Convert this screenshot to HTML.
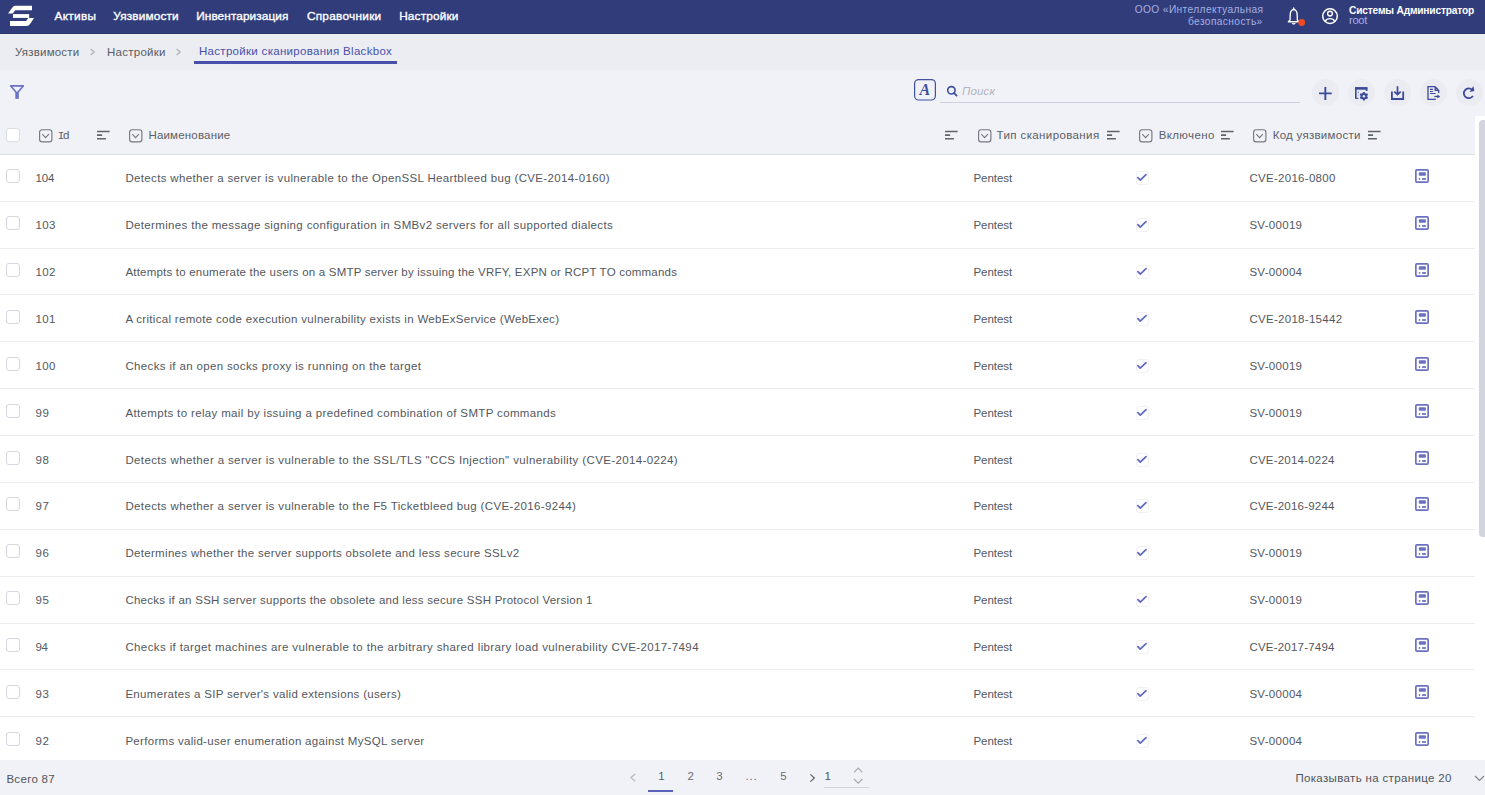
<!DOCTYPE html>
<html><head><meta charset="utf-8"><style>
html,body{margin:0;padding:0;width:1485px;height:795px;overflow:hidden;background:#f1f2f7;}
body{position:relative;font-family:"Liberation Sans",sans-serif;}
.r{position:absolute;box-sizing:content-box;}
.t{position:absolute;white-space:pre;line-height:20px;font-family:"Liberation Sans",sans-serif;}
svg.r{overflow:visible}
</style></head><body>
<div class="r" style="left:0px;top:0px;width:1485px;height:33px;background:#313d7b;"></div>
<div class="r" style="left:0px;top:33px;width:1485px;height:1px;background:#2a356e;"></div>
<div class="r" style="left:0px;top:34px;width:1485px;height:36px;background:#ecedf2;"></div>
<div class="r" style="left:0px;top:70px;width:1485px;height:690px;background:#f1f2f7;"></div>
<div class="r" style="left:194px;top:61px;width:203px;height:3px;background:#4650ab;"></div>
<div class="r" style="left:940px;top:102px;width:360px;height:1px;background:#cfd0dc;"></div>
<div class="r" style="left:0px;top:155px;width:1475px;height:605px;background:#ffffff;"></div>
<div class="r" style="left:0px;top:154px;width:1475px;height:1px;background:#dddde7;"></div>
<div class="r" style="left:1475px;top:116px;width:10px;height:644px;background:#ffffff;"></div>
<div class="r" style="left:1479px;top:120px;width:8px;height:417px;background:#d4d4e0;border-radius:4px;"></div>
<div class="r" style="left:0px;top:201px;width:1475px;height:1px;background:#ececf3;"></div>
<div class="r" style="left:0px;top:248px;width:1475px;height:1px;background:#ececf3;"></div>
<div class="r" style="left:0px;top:294px;width:1475px;height:1px;background:#ececf3;"></div>
<div class="r" style="left:0px;top:341px;width:1475px;height:1px;background:#ececf3;"></div>
<div class="r" style="left:0px;top:388px;width:1475px;height:1px;background:#ececf3;"></div>
<div class="r" style="left:0px;top:435px;width:1475px;height:1px;background:#ececf3;"></div>
<div class="r" style="left:0px;top:482px;width:1475px;height:1px;background:#ececf3;"></div>
<div class="r" style="left:0px;top:529px;width:1475px;height:1px;background:#ececf3;"></div>
<div class="r" style="left:0px;top:576px;width:1475px;height:1px;background:#ececf3;"></div>
<div class="r" style="left:0px;top:623px;width:1475px;height:1px;background:#ececf3;"></div>
<div class="r" style="left:0px;top:669px;width:1475px;height:1px;background:#ececf3;"></div>
<div class="r" style="left:0px;top:716px;width:1475px;height:1px;background:#ececf3;"></div>
<div class="r" style="left:0px;top:760px;width:1485px;height:35px;background:#f1f2f7;"></div>
<div class="r" style="left:648px;top:790px;width:25px;height:2px;background:#5a62ba;"></div>
<div class="r" style="left:824px;top:787px;width:45px;height:1px;background:#d2d3dd;"></div>
<div class="r" style="left:1312.1999999999998px;top:79px;width:26.8px;height:26.8px;border-radius:50%;background:#ebebf2"></div>
<div class="r" style="left:1348.1999999999998px;top:79px;width:26.8px;height:26.8px;border-radius:50%;background:#ebebf2"></div>
<div class="r" style="left:1384.1999999999998px;top:79px;width:26.8px;height:26.8px;border-radius:50%;background:#ebebf2"></div>
<div class="r" style="left:1420.1999999999998px;top:79px;width:26.8px;height:26.8px;border-radius:50%;background:#ebebf2"></div>
<div class="r" style="left:1456.1999999999998px;top:79px;width:26.8px;height:26.8px;border-radius:50%;background:#ebebf2"></div>
<div class="r" style="left:5.5px;top:128px;width:12px;height:12px;border:1px solid #dcdce4;border-radius:3px;background:#fff"></div>
<div class="r" style="left:5.5px;top:169px;width:12px;height:12px;border:1px solid #d6d6e0;border-radius:3px;background:#fff"></div>
<div class="r" style="left:1135.6px;top:171.2px;width:11.4px;height:11.4px;border:1px solid #f0f0f6;border-radius:3px;background:#fff"></div>
<div class="r" style="left:5.5px;top:216px;width:12px;height:12px;border:1px solid #d6d6e0;border-radius:3px;background:#fff"></div>
<div class="r" style="left:1135.6px;top:218.2px;width:11.4px;height:11.4px;border:1px solid #f0f0f6;border-radius:3px;background:#fff"></div>
<div class="r" style="left:5.5px;top:263px;width:12px;height:12px;border:1px solid #d6d6e0;border-radius:3px;background:#fff"></div>
<div class="r" style="left:1135.6px;top:265.2px;width:11.4px;height:11.4px;border:1px solid #f0f0f6;border-radius:3px;background:#fff"></div>
<div class="r" style="left:5.5px;top:310px;width:12px;height:12px;border:1px solid #d6d6e0;border-radius:3px;background:#fff"></div>
<div class="r" style="left:1135.6px;top:312.2px;width:11.4px;height:11.4px;border:1px solid #f0f0f6;border-radius:3px;background:#fff"></div>
<div class="r" style="left:5.5px;top:357px;width:12px;height:12px;border:1px solid #d6d6e0;border-radius:3px;background:#fff"></div>
<div class="r" style="left:1135.6px;top:359.2px;width:11.4px;height:11.4px;border:1px solid #f0f0f6;border-radius:3px;background:#fff"></div>
<div class="r" style="left:5.5px;top:404px;width:12px;height:12px;border:1px solid #d6d6e0;border-radius:3px;background:#fff"></div>
<div class="r" style="left:1135.6px;top:406.2px;width:11.4px;height:11.4px;border:1px solid #f0f0f6;border-radius:3px;background:#fff"></div>
<div class="r" style="left:5.5px;top:451px;width:12px;height:12px;border:1px solid #d6d6e0;border-radius:3px;background:#fff"></div>
<div class="r" style="left:1135.6px;top:453.2px;width:11.4px;height:11.4px;border:1px solid #f0f0f6;border-radius:3px;background:#fff"></div>
<div class="r" style="left:5.5px;top:497px;width:12px;height:12px;border:1px solid #d6d6e0;border-radius:3px;background:#fff"></div>
<div class="r" style="left:1135.6px;top:499.2px;width:11.4px;height:11.4px;border:1px solid #f0f0f6;border-radius:3px;background:#fff"></div>
<div class="r" style="left:5.5px;top:544px;width:12px;height:12px;border:1px solid #d6d6e0;border-radius:3px;background:#fff"></div>
<div class="r" style="left:1135.6px;top:546.2px;width:11.4px;height:11.4px;border:1px solid #f0f0f6;border-radius:3px;background:#fff"></div>
<div class="r" style="left:5.5px;top:591px;width:12px;height:12px;border:1px solid #d6d6e0;border-radius:3px;background:#fff"></div>
<div class="r" style="left:1135.6px;top:593.2px;width:11.4px;height:11.4px;border:1px solid #f0f0f6;border-radius:3px;background:#fff"></div>
<div class="r" style="left:5.5px;top:638px;width:12px;height:12px;border:1px solid #d6d6e0;border-radius:3px;background:#fff"></div>
<div class="r" style="left:1135.6px;top:640.2px;width:11.4px;height:11.4px;border:1px solid #f0f0f6;border-radius:3px;background:#fff"></div>
<div class="r" style="left:5.5px;top:685px;width:12px;height:12px;border:1px solid #d6d6e0;border-radius:3px;background:#fff"></div>
<div class="r" style="left:1135.6px;top:687.2px;width:11.4px;height:11.4px;border:1px solid #f0f0f6;border-radius:3px;background:#fff"></div>
<div class="r" style="left:5.5px;top:732px;width:12px;height:12px;border:1px solid #d6d6e0;border-radius:3px;background:#fff"></div>
<div class="r" style="left:1135.6px;top:734.2px;width:11.4px;height:11.4px;border:1px solid #f0f0f6;border-radius:3px;background:#fff"></div>
<svg class="r" style="left:0;top:0" width="40" height="33" viewBox="0 0 40 33">
<path fill="#fff" d="M8,13.6 L12.6,7.2 Q13.6,5.8 15.5,5.8 L32,5.8 L32,10.3 L15.2,10.3 L12.7,13.6 Z"/>
<rect fill="#fff" x="13" y="14.1" width="16.2" height="3.8"/>
<path fill="#fff" d="M10,21.1 L26.2,21.1 L28.2,18.1 L34,18.1 L30.4,23.6 Q29.2,25.9 26.8,25.9 L10,25.9 Z"/>
</svg>
<svg class="r" style="left:1284px;top:4px" width="24" height="24" viewBox="1284 4 24 24">
<path fill="none" stroke="#fff" stroke-width="1.35" stroke-linejoin="round" d="M1290.1,20 C1290.1,16.5 1289.9,12.8 1291.1,11.2 C1291.8,10.2 1292.7,9.5 1293.7,9.5 C1294.7,9.5 1295.6,10.2 1296.3,11.2 C1297.5,12.8 1297.3,16.5 1297.3,20 L1299,21.7 L1288.4,21.7 Z"/>
<line x1="1293.7" y1="7.9" x2="1293.7" y2="9.6" stroke="#fff" stroke-width="1.4" stroke-linecap="round"/>
<path d="M1292.2,23.1 Q1293.7,24.9 1295.2,23.1" stroke="#fff" stroke-width="1.3" fill="none"/>
<circle cx="1301.7" cy="22.5" r="3.4" fill="#ef4a24"/>
</svg>
<svg class="r" style="left:1318px;top:4px" width="24" height="24" viewBox="1318 4 24 24">
<circle cx="1330" cy="16.1" r="7.3" fill="none" stroke="#fff" stroke-width="1.5"/>
<circle cx="1330" cy="13.6" r="2.4" fill="none" stroke="#fff" stroke-width="1.4"/>
<path d="M1325.2,21.4 Q1326.5,18.6 1330,18.6 Q1333.5,18.6 1334.8,21.4" fill="none" stroke="#fff" stroke-width="1.4"/>
</svg>
<svg class="r" style="left:88.2px;top:46px" width="10" height="12" viewBox="0 0 10 12">
<path d="M2.6,3 L6.2,6 L2.6,9" fill="none" stroke="#b2b2bc" stroke-width="1.3"/></svg>
<svg class="r" style="left:174.4px;top:46px" width="10" height="12" viewBox="0 0 10 12">
<path d="M2.6,3 L6.2,6 L2.6,9" fill="none" stroke="#b2b2bc" stroke-width="1.3"/></svg>
<svg class="r" style="left:6px;top:80px" width="24" height="24" viewBox="6 80 24 24">
<path d="M10.7,85.9 L23.3,85.9 L17,93.3 Z" fill="none" stroke="#6a72c4" stroke-width="1.6" stroke-linejoin="round"/>
<rect x="15.3" y="92.3" width="3.5" height="6.5" fill="#6a72c4"/>
</svg>
<svg class="r" style="left:910px;top:75px" width="30" height="30" viewBox="910 75 30 30">
<rect x="914.6" y="79.6" width="20.8" height="20.4" rx="4" fill="none" stroke="#4252a2" stroke-width="1.2"/>
<text x="919.6" y="95.4" font-family="Liberation Serif" font-weight="bold" font-style="italic" font-size="16" fill="#3f4fa0">A</text>
</svg>
<svg class="r" style="left:942px;top:82px" width="20" height="20" viewBox="942 82 20 20">
<circle cx="951.4" cy="90.3" r="3.7" fill="none" stroke="#3f4fa0" stroke-width="1.6"/>
<line x1="953.9" y1="92.9" x2="956.6" y2="95.6" stroke="#3f4fa0" stroke-width="1.8" stroke-linecap="round"/>
</svg>
<svg class="r" style="left:1300px;top:75px" width="185" height="35" viewBox="1300 75 185 35">
<g stroke="#3b4a9a" fill="none">
<path d="M1319,93.4 L1331.7,93.4 M1325.35,87 L1325.35,99.9" stroke-width="1.9"/>
<path d="M1355.8,98.8 L1355.8,88.2 L1366.6,88.2 L1366.6,91" stroke-width="1.6"/>
<path d="M1355,88.4 L1367.4,88.4" stroke-width="2.6"/>
<path d="M1356,98.3 L1358.3,98.3" stroke-width="1.2"/>
<path d="M1357.8,92.3 L1359,92.3" stroke-width="1" opacity=".8"/>
<path d="M1357.6,95 L1358.4,95" stroke-width="1" opacity=".5"/>
<path d="M1397.5,86.2 L1397.5,94.5 M1394.3,91.6 L1397.5,94.6 L1400.7,91.6" stroke-width="1.7"/>
<path d="M1391.9,91.5 L1391.9,99 L1403.2,99 L1403.2,91.5" stroke-width="1.8"/>
<path d="M1435.3,86.7 L1428,86.7 L1428,99.3 L1435.8,99.3 M1435.3,86.7 L1438.7,90.4 L1438.7,93 M1435.2,86.8 L1435.2,90.4 L1438.6,90.4" stroke-width="1.3"/>
<path d="M1430,89.4 L1432.9,89.4 M1430,91.5 L1432.9,91.5 M1430,93.5 L1435.5,93.5" stroke-width="1.1"/>
<path d="M1434.3,96.5 L1438.3,96.5" stroke-width="1.3"/>
<path d="M1472.9,95.9 A4.9,4.9 0 1 1 1472.2,89.8" stroke-width="1.75"/>
</g>
<g fill="#3b4a9a">
<path d="M1437.3,94.6 L1440.2,96.5 L1437.3,98.6 Z"/>
<path d="M1469.6,91.9 L1474.3,91.0 L1473.4,86.1 Z"/>
<circle cx="1363.9" cy="96.2" r="3.3"/>
</g>
<g fill="#3b4a9a">
<rect x="1362.8500000000001" y="91.9" width="2.1" height="8.6" rx="0.5" transform="rotate(0 1363.9 96.2)"/><rect x="1362.8500000000001" y="91.9" width="2.1" height="8.6" rx="0.5" transform="rotate(60 1363.9 96.2)"/><rect x="1362.8500000000001" y="91.9" width="2.1" height="8.6" rx="0.5" transform="rotate(120 1363.9 96.2)"/>
</g>
<circle cx="1363.9" cy="96.2" r="1.25" fill="#ebebf2"/>
</svg>
<svg class="r" style="left:38.3px;top:127px" width="16" height="17" viewBox="38.3 127 16 17">
<rect x="39.9" y="129.7" width="12.3" height="12.1" rx="2.6" fill="none" stroke="#747880" stroke-width="1.15"/>
<path d="M42.599999999999994,134.2 L45.9,137.6 L49.199999999999996,134.2" fill="none" stroke="#747880" stroke-width="1.1"/>
</svg>
<svg class="r" style="left:128px;top:127px" width="16" height="17" viewBox="128 127 16 17">
<rect x="129.6" y="129.7" width="12.3" height="12.1" rx="2.6" fill="none" stroke="#747880" stroke-width="1.15"/>
<path d="M132.3,134.2 L135.6,137.6 L138.9,134.2" fill="none" stroke="#747880" stroke-width="1.1"/>
</svg>
<svg class="r" style="left:977.2px;top:127px" width="16" height="17" viewBox="977.2 127 16 17">
<rect x="978.8000000000001" y="129.7" width="12.3" height="12.1" rx="2.6" fill="none" stroke="#747880" stroke-width="1.15"/>
<path d="M981.5,134.2 L984.8000000000001,137.6 L988.1,134.2" fill="none" stroke="#747880" stroke-width="1.1"/>
</svg>
<svg class="r" style="left:1138.3px;top:127px" width="16" height="17" viewBox="1138.3 127 16 17">
<rect x="1139.8999999999999" y="129.7" width="12.3" height="12.1" rx="2.6" fill="none" stroke="#747880" stroke-width="1.15"/>
<path d="M1142.6,134.2 L1145.8999999999999,137.6 L1149.2,134.2" fill="none" stroke="#747880" stroke-width="1.1"/>
</svg>
<svg class="r" style="left:1252.3px;top:127px" width="16" height="17" viewBox="1252.3 127 16 17">
<rect x="1253.8999999999999" y="129.7" width="12.3" height="12.1" rx="2.6" fill="none" stroke="#747880" stroke-width="1.15"/>
<path d="M1256.6,134.2 L1259.8999999999999,137.6 L1263.2,134.2" fill="none" stroke="#747880" stroke-width="1.1"/>
</svg>
<svg class="r" style="left:96px;top:128px" width="16" height="14" viewBox="96 128 16 14">
<path d="M97,131.5 L109.6,131.5 M97,135.1 L102.1,135.1 M97,138.8 L105.9,138.8" stroke="#5f636b" stroke-width="1.6"/>
</svg>
<svg class="r" style="left:943.9px;top:128px" width="16" height="14" viewBox="943.9 128 16 14">
<path d="M944.9,131.5 L957.5,131.5 M944.9,135.1 L950.0,135.1 M944.9,138.8 L953.8,138.8" stroke="#5f636b" stroke-width="1.6"/>
</svg>
<svg class="r" style="left:1106px;top:128px" width="16" height="14" viewBox="1106 128 16 14">
<path d="M1107,131.5 L1119.6,131.5 M1107,135.1 L1112.1,135.1 M1107,138.8 L1115.9,138.8" stroke="#5f636b" stroke-width="1.6"/>
</svg>
<svg class="r" style="left:1219.9px;top:128px" width="16" height="14" viewBox="1219.9 128 16 14">
<path d="M1220.9,131.5 L1233.5,131.5 M1220.9,135.1 L1226.0,135.1 M1220.9,138.8 L1229.8000000000002,138.8" stroke="#5f636b" stroke-width="1.6"/>
</svg>
<svg class="r" style="left:1366.8px;top:128px" width="16" height="14" viewBox="1366.8 128 16 14">
<path d="M1367.8,131.5 L1380.3999999999999,131.5 M1367.8,135.1 L1372.8999999999999,135.1 M1367.8,138.8 L1376.7,138.8" stroke="#5f636b" stroke-width="1.6"/>
</svg>
<svg class="r" style="left:1130px;top:168px" width="24" height="20" viewBox="1130 168 24 20">
<path d="M1137.9,177.7 L1140.3,180.1 L1146,174.6" fill="none" stroke="#626ac2" stroke-width="1.8" stroke-linecap="round" stroke-linejoin="round"/>
</svg>
<svg class="r" style="left:1412px;top:166px" width="20" height="20" viewBox="1412 166 20 20">
<rect x="1415.85" y="169.85" width="12.3" height="12.3" rx="1.1" fill="none" stroke="#6a71c1" stroke-width="1.7"/>
<rect x="1418.8" y="172.3" width="7.1" height="3.5" rx=".8" fill="#6a71c1"/>
<rect x="1418.8" y="178.1" width="1.4" height="1.8" fill="#6a71c1"/>
<rect x="1422.1" y="178.1" width="3.8" height="1.8" fill="#6a71c1"/>
</svg>
<svg class="r" style="left:1130px;top:215px" width="24" height="20" viewBox="1130 215 24 20">
<path d="M1137.9,224.7 L1140.3,227.1 L1146,221.6" fill="none" stroke="#626ac2" stroke-width="1.8" stroke-linecap="round" stroke-linejoin="round"/>
</svg>
<svg class="r" style="left:1412px;top:213px" width="20" height="20" viewBox="1412 213 20 20">
<rect x="1415.85" y="216.85" width="12.3" height="12.3" rx="1.1" fill="none" stroke="#6a71c1" stroke-width="1.7"/>
<rect x="1418.8" y="219.3" width="7.1" height="3.5" rx=".8" fill="#6a71c1"/>
<rect x="1418.8" y="225.1" width="1.4" height="1.8" fill="#6a71c1"/>
<rect x="1422.1" y="225.1" width="3.8" height="1.8" fill="#6a71c1"/>
</svg>
<svg class="r" style="left:1130px;top:262px" width="24" height="20" viewBox="1130 262 24 20">
<path d="M1137.9,271.7 L1140.3,274.1 L1146,268.6" fill="none" stroke="#626ac2" stroke-width="1.8" stroke-linecap="round" stroke-linejoin="round"/>
</svg>
<svg class="r" style="left:1412px;top:260px" width="20" height="20" viewBox="1412 260 20 20">
<rect x="1415.85" y="263.85" width="12.3" height="12.3" rx="1.1" fill="none" stroke="#6a71c1" stroke-width="1.7"/>
<rect x="1418.8" y="266.3" width="7.1" height="3.5" rx=".8" fill="#6a71c1"/>
<rect x="1418.8" y="272.1" width="1.4" height="1.8" fill="#6a71c1"/>
<rect x="1422.1" y="272.1" width="3.8" height="1.8" fill="#6a71c1"/>
</svg>
<svg class="r" style="left:1130px;top:309px" width="24" height="20" viewBox="1130 309 24 20">
<path d="M1137.9,318.7 L1140.3,321.1 L1146,315.6" fill="none" stroke="#626ac2" stroke-width="1.8" stroke-linecap="round" stroke-linejoin="round"/>
</svg>
<svg class="r" style="left:1412px;top:307px" width="20" height="20" viewBox="1412 307 20 20">
<rect x="1415.85" y="310.85" width="12.3" height="12.3" rx="1.1" fill="none" stroke="#6a71c1" stroke-width="1.7"/>
<rect x="1418.8" y="313.3" width="7.1" height="3.5" rx=".8" fill="#6a71c1"/>
<rect x="1418.8" y="319.1" width="1.4" height="1.8" fill="#6a71c1"/>
<rect x="1422.1" y="319.1" width="3.8" height="1.8" fill="#6a71c1"/>
</svg>
<svg class="r" style="left:1130px;top:356px" width="24" height="20" viewBox="1130 356 24 20">
<path d="M1137.9,365.7 L1140.3,368.1 L1146,362.6" fill="none" stroke="#626ac2" stroke-width="1.8" stroke-linecap="round" stroke-linejoin="round"/>
</svg>
<svg class="r" style="left:1412px;top:354px" width="20" height="20" viewBox="1412 354 20 20">
<rect x="1415.85" y="357.85" width="12.3" height="12.3" rx="1.1" fill="none" stroke="#6a71c1" stroke-width="1.7"/>
<rect x="1418.8" y="360.3" width="7.1" height="3.5" rx=".8" fill="#6a71c1"/>
<rect x="1418.8" y="366.1" width="1.4" height="1.8" fill="#6a71c1"/>
<rect x="1422.1" y="366.1" width="3.8" height="1.8" fill="#6a71c1"/>
</svg>
<svg class="r" style="left:1130px;top:403px" width="24" height="20" viewBox="1130 403 24 20">
<path d="M1137.9,412.7 L1140.3,415.1 L1146,409.6" fill="none" stroke="#626ac2" stroke-width="1.8" stroke-linecap="round" stroke-linejoin="round"/>
</svg>
<svg class="r" style="left:1412px;top:401px" width="20" height="20" viewBox="1412 401 20 20">
<rect x="1415.85" y="404.85" width="12.3" height="12.3" rx="1.1" fill="none" stroke="#6a71c1" stroke-width="1.7"/>
<rect x="1418.8" y="407.3" width="7.1" height="3.5" rx=".8" fill="#6a71c1"/>
<rect x="1418.8" y="413.1" width="1.4" height="1.8" fill="#6a71c1"/>
<rect x="1422.1" y="413.1" width="3.8" height="1.8" fill="#6a71c1"/>
</svg>
<svg class="r" style="left:1130px;top:450px" width="24" height="20" viewBox="1130 450 24 20">
<path d="M1137.9,459.7 L1140.3,462.1 L1146,456.6" fill="none" stroke="#626ac2" stroke-width="1.8" stroke-linecap="round" stroke-linejoin="round"/>
</svg>
<svg class="r" style="left:1412px;top:448px" width="20" height="20" viewBox="1412 448 20 20">
<rect x="1415.85" y="451.85" width="12.3" height="12.3" rx="1.1" fill="none" stroke="#6a71c1" stroke-width="1.7"/>
<rect x="1418.8" y="454.3" width="7.1" height="3.5" rx=".8" fill="#6a71c1"/>
<rect x="1418.8" y="460.1" width="1.4" height="1.8" fill="#6a71c1"/>
<rect x="1422.1" y="460.1" width="3.8" height="1.8" fill="#6a71c1"/>
</svg>
<svg class="r" style="left:1130px;top:496px" width="24" height="20" viewBox="1130 496 24 20">
<path d="M1137.9,505.7 L1140.3,508.1 L1146,502.6" fill="none" stroke="#626ac2" stroke-width="1.8" stroke-linecap="round" stroke-linejoin="round"/>
</svg>
<svg class="r" style="left:1412px;top:494px" width="20" height="20" viewBox="1412 494 20 20">
<rect x="1415.85" y="497.85" width="12.3" height="12.3" rx="1.1" fill="none" stroke="#6a71c1" stroke-width="1.7"/>
<rect x="1418.8" y="500.3" width="7.1" height="3.5" rx=".8" fill="#6a71c1"/>
<rect x="1418.8" y="506.1" width="1.4" height="1.8" fill="#6a71c1"/>
<rect x="1422.1" y="506.1" width="3.8" height="1.8" fill="#6a71c1"/>
</svg>
<svg class="r" style="left:1130px;top:543px" width="24" height="20" viewBox="1130 543 24 20">
<path d="M1137.9,552.7 L1140.3,555.1 L1146,549.6" fill="none" stroke="#626ac2" stroke-width="1.8" stroke-linecap="round" stroke-linejoin="round"/>
</svg>
<svg class="r" style="left:1412px;top:541px" width="20" height="20" viewBox="1412 541 20 20">
<rect x="1415.85" y="544.85" width="12.3" height="12.3" rx="1.1" fill="none" stroke="#6a71c1" stroke-width="1.7"/>
<rect x="1418.8" y="547.3" width="7.1" height="3.5" rx=".8" fill="#6a71c1"/>
<rect x="1418.8" y="553.1" width="1.4" height="1.8" fill="#6a71c1"/>
<rect x="1422.1" y="553.1" width="3.8" height="1.8" fill="#6a71c1"/>
</svg>
<svg class="r" style="left:1130px;top:590px" width="24" height="20" viewBox="1130 590 24 20">
<path d="M1137.9,599.7 L1140.3,602.1 L1146,596.6" fill="none" stroke="#626ac2" stroke-width="1.8" stroke-linecap="round" stroke-linejoin="round"/>
</svg>
<svg class="r" style="left:1412px;top:588px" width="20" height="20" viewBox="1412 588 20 20">
<rect x="1415.85" y="591.85" width="12.3" height="12.3" rx="1.1" fill="none" stroke="#6a71c1" stroke-width="1.7"/>
<rect x="1418.8" y="594.3" width="7.1" height="3.5" rx=".8" fill="#6a71c1"/>
<rect x="1418.8" y="600.1" width="1.4" height="1.8" fill="#6a71c1"/>
<rect x="1422.1" y="600.1" width="3.8" height="1.8" fill="#6a71c1"/>
</svg>
<svg class="r" style="left:1130px;top:637px" width="24" height="20" viewBox="1130 637 24 20">
<path d="M1137.9,646.7 L1140.3,649.1 L1146,643.6" fill="none" stroke="#626ac2" stroke-width="1.8" stroke-linecap="round" stroke-linejoin="round"/>
</svg>
<svg class="r" style="left:1412px;top:635px" width="20" height="20" viewBox="1412 635 20 20">
<rect x="1415.85" y="638.85" width="12.3" height="12.3" rx="1.1" fill="none" stroke="#6a71c1" stroke-width="1.7"/>
<rect x="1418.8" y="641.3" width="7.1" height="3.5" rx=".8" fill="#6a71c1"/>
<rect x="1418.8" y="647.1" width="1.4" height="1.8" fill="#6a71c1"/>
<rect x="1422.1" y="647.1" width="3.8" height="1.8" fill="#6a71c1"/>
</svg>
<svg class="r" style="left:1130px;top:684px" width="24" height="20" viewBox="1130 684 24 20">
<path d="M1137.9,693.7 L1140.3,696.1 L1146,690.6" fill="none" stroke="#626ac2" stroke-width="1.8" stroke-linecap="round" stroke-linejoin="round"/>
</svg>
<svg class="r" style="left:1412px;top:682px" width="20" height="20" viewBox="1412 682 20 20">
<rect x="1415.85" y="685.85" width="12.3" height="12.3" rx="1.1" fill="none" stroke="#6a71c1" stroke-width="1.7"/>
<rect x="1418.8" y="688.3" width="7.1" height="3.5" rx=".8" fill="#6a71c1"/>
<rect x="1418.8" y="694.1" width="1.4" height="1.8" fill="#6a71c1"/>
<rect x="1422.1" y="694.1" width="3.8" height="1.8" fill="#6a71c1"/>
</svg>
<svg class="r" style="left:1130px;top:731px" width="24" height="20" viewBox="1130 731 24 20">
<path d="M1137.9,740.7 L1140.3,743.1 L1146,737.6" fill="none" stroke="#626ac2" stroke-width="1.8" stroke-linecap="round" stroke-linejoin="round"/>
</svg>
<svg class="r" style="left:1412px;top:729px" width="20" height="20" viewBox="1412 729 20 20">
<rect x="1415.85" y="732.85" width="12.3" height="12.3" rx="1.1" fill="none" stroke="#6a71c1" stroke-width="1.7"/>
<rect x="1418.8" y="735.3" width="7.1" height="3.5" rx=".8" fill="#6a71c1"/>
<rect x="1418.8" y="741.1" width="1.4" height="1.8" fill="#6a71c1"/>
<rect x="1422.1" y="741.1" width="3.8" height="1.8" fill="#6a71c1"/>
</svg>
<svg class="r" style="left:600px;top:760px" width="300" height="35" viewBox="600 760 300 35">
<path d="M635.2,774 L631,777.6 L635.2,781.2" fill="none" stroke="#b5b6be" stroke-width="1.2"/>
<path d="M810.4,774.4 L814.4,778 L810.4,781.6" fill="none" stroke="#5a5e64" stroke-width="1.15"/>
<path d="M854,772.4 L858.2,768.2 L862.4,772.4" fill="none" stroke="#a8a9b2" stroke-width="1.2"/>
<path d="M854,779 L858.2,783.2 L862.4,779" fill="none" stroke="#a8a9b2" stroke-width="1.2"/>
</svg>
<svg class="r" style="left:1470px;top:770px" width="15" height="15" viewBox="1470 770 15 15">
<path d="M1475,776 L1479.5,780.5 L1484,776" fill="none" stroke="#80838b" stroke-width="1.2"/>
</svg>
<span class="t" style="left:54.50px;top:5.91px;font-size:11.8px;color:#ffffff;letter-spacing:0.316px;-webkit-text-stroke:0.35px #ffffff;">Активы</span>
<span class="t" style="left:113.30px;top:5.91px;font-size:11.8px;color:#ffffff;letter-spacing:0.152px;-webkit-text-stroke:0.35px #ffffff;">Уязвимости</span>
<span class="t" style="left:196.20px;top:5.91px;font-size:11.8px;color:#ffffff;letter-spacing:0.100px;-webkit-text-stroke:0.35px #ffffff;">Инвентаризация</span>
<span class="t" style="left:306.90px;top:5.91px;font-size:11.8px;color:#ffffff;letter-spacing:0.282px;-webkit-text-stroke:0.35px #ffffff;">Справочники</span>
<span class="t" style="left:399.20px;top:5.91px;font-size:11.8px;color:#ffffff;letter-spacing:0.168px;-webkit-text-stroke:0.35px #ffffff;">Настройки</span>
<span class="t" style="left:1134.70px;top:0.47px;font-size:10.2px;color:#a4afe2;letter-spacing:0.385px;">ООО «Интеллектуальная</span>
<span class="t" style="left:1188.00px;top:12.17px;font-size:10.2px;color:#a4afe2;letter-spacing:0.382px;">безопасность»</span>
<span class="t" style="left:1349.00px;top:0.57px;font-size:10.2px;color:#ffffff;letter-spacing:-0.177px;font-weight:bold;">Системы Администратор</span>
<span class="t" style="left:1349.00px;top:9.92px;font-size:11.2px;color:#a4afe2;letter-spacing:-0.290px;">root</span>
<span class="t" style="left:15.10px;top:42.02px;font-size:11.5px;color:#595c62;letter-spacing:0.201px;">Уязвимости</span>
<span class="t" style="left:107.00px;top:42.02px;font-size:11.5px;color:#595c62;letter-spacing:0.254px;">Настройки</span>
<span class="t" style="left:199.00px;top:41.22px;font-size:11.5px;color:#4750aa;letter-spacing:0.301px;">Настройки сканирования Blackbox</span>
<span class="t" style="left:962.00px;top:81.02px;font-size:11.5px;color:#b3b4c4;letter-spacing:0.156px;font-style:italic;">Поиск</span>
<span class="t" style="left:57.70px;top:124.82px;font-size:11.5px;color:#5b5e66;letter-spacing:0.300px;"><span style="font-family:'Liberation Mono';font-size:11px;letter-spacing:-1.2px">I</span>d</span>
<span class="t" style="left:148.40px;top:125.02px;font-size:11.5px;color:#5b5e66;letter-spacing:0.189px;">Наименование</span>
<span class="t" style="left:996.60px;top:125.02px;font-size:11.5px;color:#5b5e66;letter-spacing:0.386px;">Тип сканирования</span>
<span class="t" style="left:1158.70px;top:125.02px;font-size:11.5px;color:#5b5e66;letter-spacing:0.378px;">Включено</span>
<span class="t" style="left:1272.70px;top:125.02px;font-size:11.5px;color:#5b5e66;letter-spacing:0.275px;">Код уязвимости</span>
<span class="t" style="left:35.60px;top:168.02px;font-size:11.5px;color:#53575e;letter-spacing:-0.246px;">104</span>
<span class="t" style="left:125.40px;top:168.02px;font-size:11.5px;color:#53575e;letter-spacing:0.346px;">Detects whether a server is vulnerable to the OpenSSL Heartbleed bug (CVE-2014-0160)</span>
<span class="t" style="left:973.50px;top:168.02px;font-size:11.5px;color:#53575e;letter-spacing:-0.067px;">Pentest</span>
<span class="t" style="left:1249.40px;top:168.02px;font-size:11.5px;color:#53575e;letter-spacing:0.294px;">CVE-2016-0800</span>
<span class="t" style="left:35.60px;top:215.02px;font-size:11.5px;color:#53575e;letter-spacing:0.254px;">103</span>
<span class="t" style="left:125.40px;top:215.02px;font-size:11.5px;color:#53575e;letter-spacing:0.341px;">Determines the message signing configuration in SMBv2 servers for all supported dialects</span>
<span class="t" style="left:973.50px;top:215.02px;font-size:11.5px;color:#53575e;letter-spacing:-0.067px;">Pentest</span>
<span class="t" style="left:1249.40px;top:215.02px;font-size:11.5px;color:#53575e;letter-spacing:0.294px;">SV-00019</span>
<span class="t" style="left:35.60px;top:262.02px;font-size:11.5px;color:#53575e;letter-spacing:0.254px;">102</span>
<span class="t" style="left:125.40px;top:262.02px;font-size:11.5px;color:#53575e;letter-spacing:0.210px;">Attempts to enumerate the users on a SMTP server by issuing the VRFY, EXPN or RCPT TO commands</span>
<span class="t" style="left:973.50px;top:262.02px;font-size:11.5px;color:#53575e;letter-spacing:-0.067px;">Pentest</span>
<span class="t" style="left:1249.40px;top:262.02px;font-size:11.5px;color:#53575e;letter-spacing:0.294px;">SV-00004</span>
<span class="t" style="left:35.60px;top:309.02px;font-size:11.5px;color:#53575e;letter-spacing:0.254px;">101</span>
<span class="t" style="left:125.40px;top:309.02px;font-size:11.5px;color:#53575e;letter-spacing:0.312px;">A critical remote code execution vulnerability exists in WebExService (WebExec)</span>
<span class="t" style="left:973.50px;top:309.02px;font-size:11.5px;color:#53575e;letter-spacing:-0.067px;">Pentest</span>
<span class="t" style="left:1249.40px;top:309.02px;font-size:11.5px;color:#53575e;letter-spacing:0.294px;">CVE-2018-15442</span>
<span class="t" style="left:35.60px;top:356.02px;font-size:11.5px;color:#53575e;letter-spacing:0.254px;">100</span>
<span class="t" style="left:125.40px;top:356.02px;font-size:11.5px;color:#53575e;letter-spacing:0.353px;">Checks if an open socks proxy is running on the target</span>
<span class="t" style="left:973.50px;top:356.02px;font-size:11.5px;color:#53575e;letter-spacing:-0.067px;">Pentest</span>
<span class="t" style="left:1249.40px;top:356.02px;font-size:11.5px;color:#53575e;letter-spacing:0.294px;">SV-00019</span>
<span class="t" style="left:35.60px;top:403.02px;font-size:11.5px;color:#53575e;letter-spacing:0.604px;">99</span>
<span class="t" style="left:125.40px;top:403.02px;font-size:11.5px;color:#53575e;letter-spacing:0.351px;">Attempts to relay mail by issuing a predefined combination of SMTP commands</span>
<span class="t" style="left:973.50px;top:403.02px;font-size:11.5px;color:#53575e;letter-spacing:-0.067px;">Pentest</span>
<span class="t" style="left:1249.40px;top:403.02px;font-size:11.5px;color:#53575e;letter-spacing:0.294px;">SV-00019</span>
<span class="t" style="left:35.60px;top:450.02px;font-size:11.5px;color:#53575e;letter-spacing:0.604px;">98</span>
<span class="t" style="left:125.40px;top:450.02px;font-size:11.5px;color:#53575e;letter-spacing:0.373px;">Detects whether a server is vulnerable to the SSL/TLS &quot;CCS Injection&quot; vulnerability (CVE-2014-0224)</span>
<span class="t" style="left:973.50px;top:450.02px;font-size:11.5px;color:#53575e;letter-spacing:-0.067px;">Pentest</span>
<span class="t" style="left:1249.40px;top:450.02px;font-size:11.5px;color:#53575e;letter-spacing:0.210px;">CVE-2014-0224</span>
<span class="t" style="left:35.60px;top:496.02px;font-size:11.5px;color:#53575e;letter-spacing:0.604px;">97</span>
<span class="t" style="left:125.40px;top:496.02px;font-size:11.5px;color:#53575e;letter-spacing:0.371px;">Detects whether a server is vulnerable to the F5 Ticketbleed bug (CVE-2016-9244)</span>
<span class="t" style="left:973.50px;top:496.02px;font-size:11.5px;color:#53575e;letter-spacing:-0.067px;">Pentest</span>
<span class="t" style="left:1249.40px;top:496.02px;font-size:11.5px;color:#53575e;letter-spacing:0.210px;">CVE-2016-9244</span>
<span class="t" style="left:35.60px;top:543.02px;font-size:11.5px;color:#53575e;letter-spacing:0.604px;">96</span>
<span class="t" style="left:125.40px;top:543.02px;font-size:11.5px;color:#53575e;letter-spacing:0.320px;">Determines whether the server supports obsolete and less secure SSLv2</span>
<span class="t" style="left:973.50px;top:543.02px;font-size:11.5px;color:#53575e;letter-spacing:-0.067px;">Pentest</span>
<span class="t" style="left:1249.40px;top:543.02px;font-size:11.5px;color:#53575e;letter-spacing:0.294px;">SV-00019</span>
<span class="t" style="left:35.60px;top:590.02px;font-size:11.5px;color:#53575e;letter-spacing:0.604px;">95</span>
<span class="t" style="left:125.40px;top:590.02px;font-size:11.5px;color:#53575e;letter-spacing:0.259px;">Checks if an SSH server supports the obsolete and less secure SSH Protocol Version 1</span>
<span class="t" style="left:973.50px;top:590.02px;font-size:11.5px;color:#53575e;letter-spacing:-0.067px;">Pentest</span>
<span class="t" style="left:1249.40px;top:590.02px;font-size:11.5px;color:#53575e;letter-spacing:0.294px;">SV-00019</span>
<span class="t" style="left:35.60px;top:637.02px;font-size:11.5px;color:#53575e;letter-spacing:-0.396px;">94</span>
<span class="t" style="left:125.40px;top:637.02px;font-size:11.5px;color:#53575e;letter-spacing:0.385px;">Checks if target machines are vulnerable to the arbitrary shared library load vulnerability CVE-2017-7494</span>
<span class="t" style="left:973.50px;top:637.02px;font-size:11.5px;color:#53575e;letter-spacing:-0.067px;">Pentest</span>
<span class="t" style="left:1249.40px;top:637.02px;font-size:11.5px;color:#53575e;letter-spacing:0.210px;">CVE-2017-7494</span>
<span class="t" style="left:35.60px;top:684.02px;font-size:11.5px;color:#53575e;letter-spacing:0.604px;">93</span>
<span class="t" style="left:125.40px;top:684.02px;font-size:11.5px;color:#53575e;letter-spacing:0.311px;">Enumerates a SIP server's valid extensions (users)</span>
<span class="t" style="left:973.50px;top:684.02px;font-size:11.5px;color:#53575e;letter-spacing:-0.067px;">Pentest</span>
<span class="t" style="left:1249.40px;top:684.02px;font-size:11.5px;color:#53575e;letter-spacing:0.294px;">SV-00004</span>
<span class="t" style="left:35.60px;top:731.02px;font-size:11.5px;color:#53575e;letter-spacing:0.604px;">92</span>
<span class="t" style="left:125.40px;top:731.02px;font-size:11.5px;color:#53575e;letter-spacing:0.303px;">Performs valid-user enumeration against MySQL server</span>
<span class="t" style="left:973.50px;top:731.02px;font-size:11.5px;color:#53575e;letter-spacing:-0.067px;">Pentest</span>
<span class="t" style="left:1249.40px;top:731.02px;font-size:11.5px;color:#53575e;letter-spacing:0.294px;">SV-00004</span>
<span class="t" style="left:6.40px;top:769.02px;font-size:11.5px;color:#50545a;letter-spacing:0.308px;">Всего 87</span>
<span class="t" style="left:658.20px;top:766.22px;font-size:11.5px;color:#5a5d63;letter-spacing:0.000px;">1</span>
<span class="t" style="left:687.40px;top:766.22px;font-size:11.5px;color:#6a6d73;letter-spacing:0.000px;">2</span>
<span class="t" style="left:716.30px;top:766.22px;font-size:11.5px;color:#6a6d73;letter-spacing:0.000px;">3</span>
<span class="t" style="left:745.40px;top:766.22px;font-size:11.5px;color:#6a6d73;letter-spacing:0.905px;">...</span>
<span class="t" style="left:780.20px;top:766.22px;font-size:11.5px;color:#6a6d73;letter-spacing:0.000px;">5</span>
<span class="t" style="left:824.60px;top:766.22px;font-size:11.5px;color:#50545a;letter-spacing:0.000px;">1</span>
<span class="t" style="left:1295.40px;top:768.02px;font-size:11.5px;color:#50545a;letter-spacing:0.346px;">Показывать на странице 20</span>
</body></html>
